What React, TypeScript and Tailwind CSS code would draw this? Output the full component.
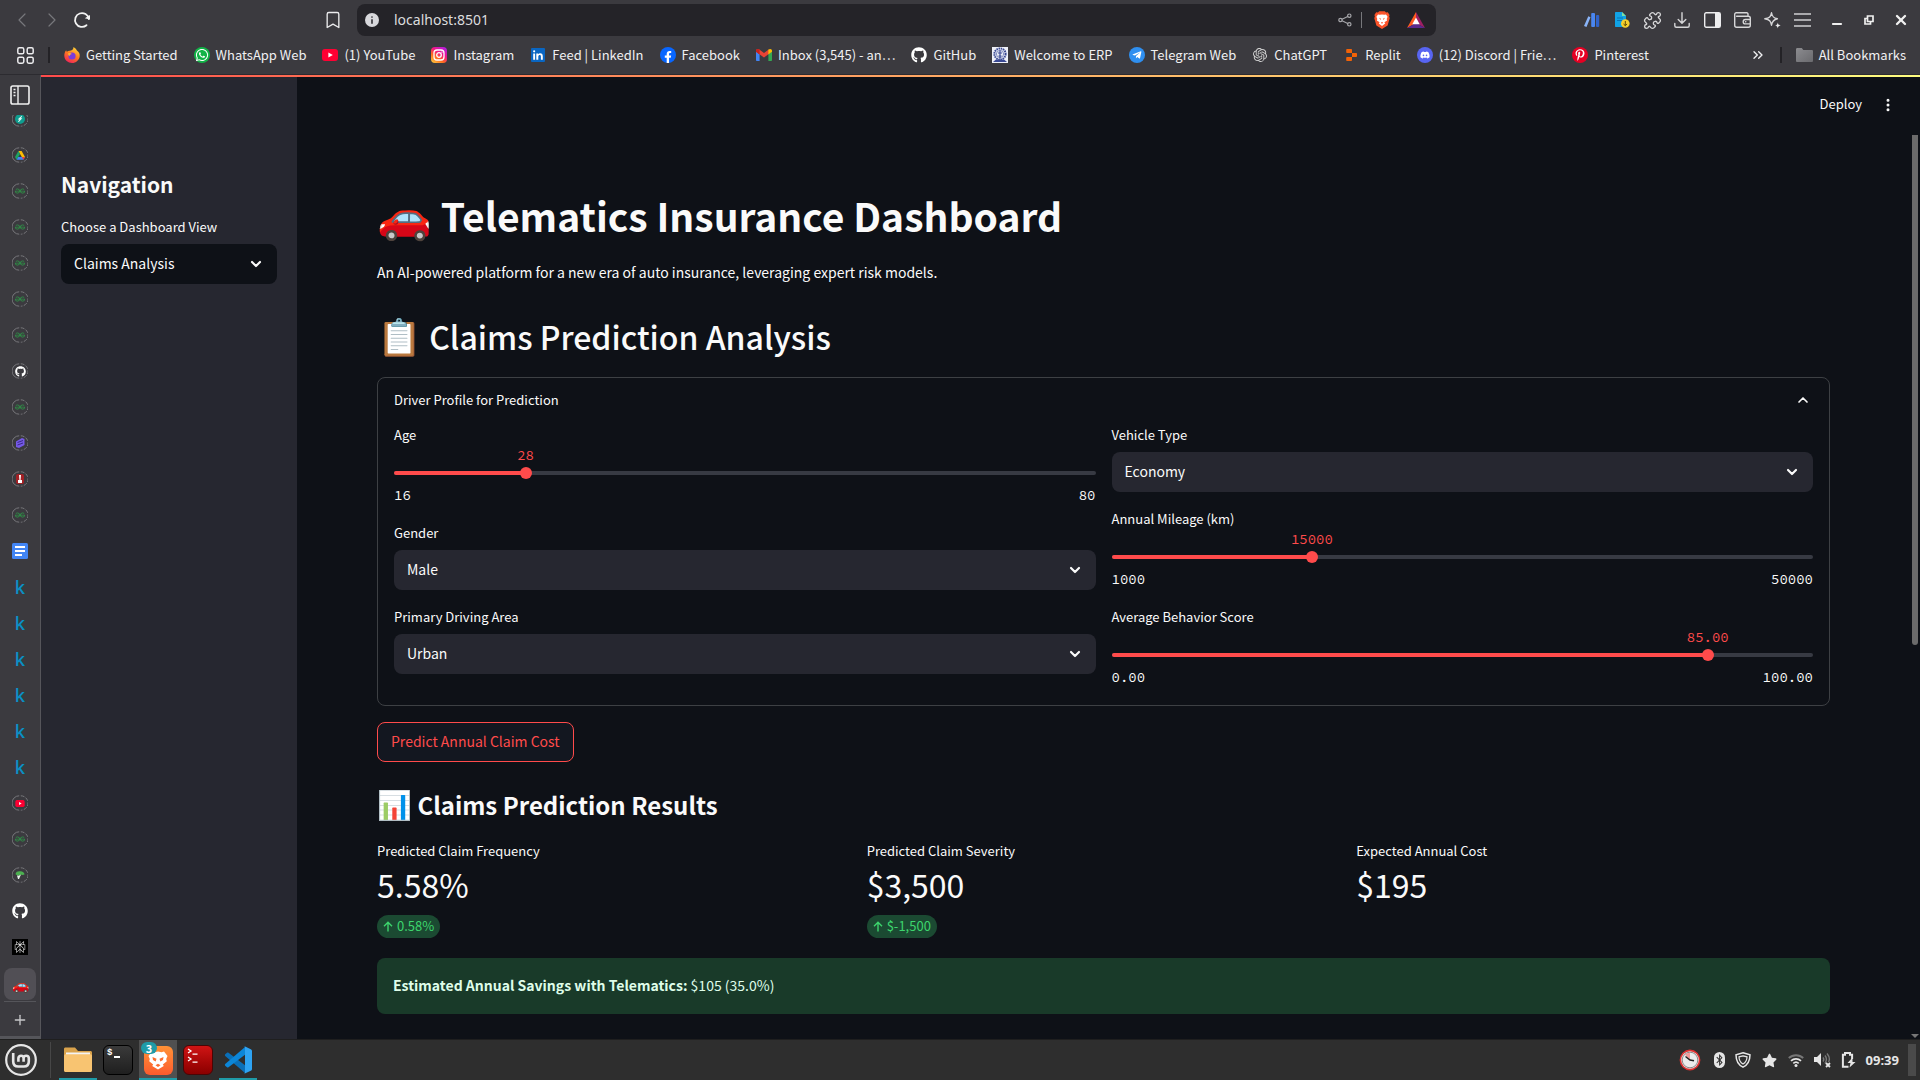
import React, { useId, useState } from "react";
import type { ReactNode } from "react";
import {
  Bookmark,
  ChevronDown,
  ChevronLeft,
  ChevronRight,
  ChevronUp,
  ChevronsRight,
  EllipsisVertical,
  Minus,
  Plus,
  Puzzle,
  X,
} from "lucide-react";
import { FaBluetoothB, FaDiscord, FaFacebookF, FaGithub, FaPinterestP, FaStar, FaTelegramPlane, FaWhatsapp } from "react-icons/fa";
import { SiGeeksforgeeks, SiOpenai, SiPerplexity } from "react-icons/si";

/* ---------- small drawings ---------- */

const Firefox = () => (
  <svg viewBox="0 0 16 16" className="size-4">
    <defs>
      <linearGradient id="ff" x1="0.8" y1="0" x2="0.3" y2="1">
        <stop offset="0" stopColor="#ffde3a" />
        <stop offset="0.5" stopColor="#ff7a1f" />
        <stop offset="1" stopColor="#f0235a" />
      </linearGradient>
    </defs>
    <path d="M9.500 0c2 1.200 3 2.600 3.400 3.600C15 5 16 7 15.700 9.200 15.200 13 12 16 8 16S.4 13 .3 8.800C.2 6.600 1 4.500 2.200 3.200c.1.700.4 1.200.7 1.500C4 3.800 5 3.500 6 3.700 8.500 3.500 9.600 1.800 9.500 0z" fill="url(#ff)" />
    <circle cx="8" cy="9" r="3.600" fill="#7a3bdb" />
    <path d="M4 6.500c1.500-.8 3-.4 3.800.5-.8.300-2 .6-2 1.800C4.800 9 4.200 8 4 6.500z" fill="#ffb02e" />
  </svg>
);

const YouTube = ({ className = "h-3 w-4" }: { className?: string }) => (
  <svg viewBox="0 0 16 12" className={className}>
    <rect width="16" height="12" rx="3" fill="#ff0033" />
    <path d="M6.400 3.400v5.200L10.800 6z" fill="#fff" />
  </svg>
);

const Instagram = () => (
  <svg viewBox="0 0 16 16" className="size-4">
    <defs>
      <linearGradient id="ig" x1="0.1" y1="1" x2="0.8" y2="0">
        <stop offset="0" stopColor="#ffc83d" />
        <stop offset="0.35" stopColor="#ff6a1f" />
        <stop offset="0.65" stopColor="#f0148a" />
        <stop offset="1" stopColor="#b41ee0" />
      </linearGradient>
    </defs>
    <rect width="16" height="16" rx="4" fill="url(#ig)" />
    <rect x="3" y="3" width="10" height="10" rx="3" fill="none" stroke="#fff" strokeWidth="1.300" />
    <circle cx="8" cy="8" r="2.300" fill="none" stroke="#fff" strokeWidth="1.300" />
    <circle cx="10.900" cy="5.100" r="0.700" fill="#fff" />
  </svg>
);

const LinkedIn = () => (
  <svg viewBox="0 0 14 14" className="size-3.5">
    <rect width="14" height="14" rx="1" fill="#0a66c2" />
    <path d="M2.200 5.400h1.900v6.300H2.200zM3.150 2.200a1.100 1.100 0 110 2.200 1.100 1.100 0 010-2.200zM5.300 5.400h1.800v.9c.4-.7 1.100-1.100 2-1.100 1.900 0 2.700 1.100 2.700 3v3.500H9.900V8.600c0-1-.3-1.600-1.100-1.600-.9 0-1.500.6-1.500 1.700v3H5.300z" fill="#fff" />
  </svg>
);

const Gmail = () => (
  <svg viewBox="0 0 16 12" className="h-3 w-4">
    <path d="M0 2.500v8.700c0 .5.400.8.800.8h2.800V5.200z" fill="#4285f4" />
    <path d="M16 2.500v8.700c0 .5-.4.800-.8.800h-2.800V5.200z" fill="#34a853" />
    <path d="M0 1.800C0 .2 1.800-.6 3 .3l5 3.700 5-3.700v4.500L8 8.600 0 2.700z" fill="#ea4335" />
    <path d="M12.400.8C14-.6 16 .2 16 1.800v.9l-3.600 2.700z" fill="#fbbc04" />
    <path d="M3.600 5.400L0 2.700v-.9C0 .2 1.800-.4 3 .3l.6.400z" fill="#c5221f" />
  </svg>
);

const Erp = () => (
  <svg viewBox="0 0 16 16" className="size-4">
    <rect width="16" height="16" fill="#eef0f8" />
    <circle cx="8" cy="7" r="5.600" fill="none" stroke="#3b4a94" strokeWidth="2" strokeDasharray="1.500 0.700" />
    <circle cx="8" cy="7" r="3.600" fill="none" stroke="#6673b0" strokeWidth="0.800" />
    <path d="M8 3.500v8M6 6h4M6.500 9h3" stroke="#3b4a94" strokeWidth="1.200" />
    <path d="M1 15l3-2.500h8l3 2.500z" fill="#3b4a94" />
  </svg>
);

const Replit = () => (
  <svg viewBox="0 0 16 16" className="size-4">
    <path d="M4 2h4.200c.4 0 .8.400.8.800V6H4a.8.800 0 01-.8-.8V2.800c0-.4.400-.8.8-.8zM9 6h4.200c.4 0 .8.400.8.800v2.400c0 .4-.4.800-.8.800H9zM4 10h5v3.200c0 .4-.4.800-.8.800H4a.8.800 0 01-.8-.8v-2.400c0-.4.400-.8.8-.8z" fill="#f26207" />
  </svg>
);

const FolderSmall = () => (
  <svg viewBox="0 0 17 14" className="h-3.5 w-[17px]">
    <defs>
      <linearGradient id="fs" x1="0" y1="0" x2="1" y2="1">
        <stop offset="0" stopColor="#8c8c90" />
        <stop offset="1" stopColor="#6a6a6e" />
      </linearGradient>
    </defs>
    <path d="M0 1.500C0 .6.500 0 1.300 0h4.500l1.500 2h8.400c.8 0 1.300.5 1.300 1.300v9.400c0 .8-.5 1.300-1.300 1.300H1.300C.5 14 0 13.500 0 12.700z" fill="url(#fs)" />
  </svg>
);

const stroke = { fill: "none", stroke: "#d6d6d8", strokeWidth: 1.4, strokeLinecap: "round", strokeLinejoin: "round" } as const;

const Reload = () => (
  <svg viewBox="0 0 18 18" className="size-[18px]">
    <path d="M13.500 14.200A6.900 6.900 0 1115.800 8" {...stroke} stroke="#f2f2f2" strokeWidth="1.800" />
    <path d="M11.800 7.200l5.200 1.400V4z" fill="#f2f2f2" />
  </svg>
);

const Share = () => (
  <svg viewBox="0 0 14 14" className="size-3.5">
    <g {...stroke} strokeWidth="1.200" stroke="#a5a5a9">
      <circle cx="2.500" cy="7" r="1.700" />
      <circle cx="11.300" cy="2.700" r="1.700" />
      <circle cx="11.300" cy="11.300" r="1.700" />
      <path d="M4.100 6.200l5.600-2.700M4.100 7.800l5.600 2.700" />
    </g>
  </svg>
);

const BraveShield = () => (
  <svg viewBox="0 0 16 18" className="h-[18px] w-4">
    <path d="M4 1.500L5.200.2h5.600L12 1.500l1.800-.2L15.600 4l-.5 1.300.6 1.900-2.100 7.300L8 18l-5.600-3.500L.3 7.200l.6-1.900L.4 4l1.800-2.700z" fill="#fb542b" />
    <path d="M8 3.400l2.300.4 1.700-.4 1.600 2.300-.9 2.200.4 1.500-2.700 1.900.8 1.300L8 15l-3.200-2.400.8-1.300-2.700-1.900.4-1.500-.9-2.200L4 3.400l1.700.4z" fill="#fff" />
    <path d="M5 6.800l2 .9-.5 1.200zM11 6.800l-2 .9.500 1.200zM6.800 11.800L8 11l1.200.8L8 12.800z" fill="#fb542b" />
  </svg>
);

const BatTriangle = () => (
  <svg viewBox="0 0 18 16" className="h-4 w-[18px]">
    <path d="M9 0L0 16l9-5z" fill="#ff5a1f" />
    <path d="M9 0l9 16-9-5z" fill="#9e1f63" />
    <path d="M0 16h18l-9-5z" fill="#5b2a8c" />
    <path d="M9 5.500l3.700 6.800H5.300z" fill="#fff" />
  </svg>
);

const BlueBars = () => (
  <svg viewBox="0 0 16 14" className="h-3.5 w-4">
    <path d="M0 13.500L4.500 3l2 .9v9.600z" fill="#8ab4f8" opacity="0" />
    <path d="M0 13L4.300 3.200l2.200 1L2.500 14z" fill="#8ab4f8" />
    <rect x="7.200" width="3.800" height="14" rx="1" fill="#4a86f0" />
    <rect x="12" y="2" width="3.200" height="12" rx="1" fill="#2f62c9" />
  </svg>
);

const DocDownload = () => (
  <svg viewBox="0 0 16 16" className="size-4">
    <path d="M1 1c0-.6.400-1 1-1h6l4 4v11H2c-.6 0-1-.4-1-1z" fill="#11a3e6" />
    <path d="M8 0l4 4H8z" fill="#7ee0a0" />
    <path d="M3 6h6M3 8.500h5" stroke="#0873b5" />
    <circle cx="11.300" cy="11.500" r="4.300" fill="#f7d02c" />
    <path d="M11.300 9v4.500M9.500 12l1.800 1.700L13.100 12" fill="none" stroke="#5a4a00" />
  </svg>
);

const Download = () => (
  <svg viewBox="0 0 16 16" className="size-4">
    <path d="M8 .8v10M4.200 7.400L8 11.200l3.800-3.800M.8 11.500v2.200c0 .8.600 1.500 1.500 1.500h11.400c.9 0 1.500-.7 1.500-1.500v-2.200" {...stroke} />
  </svg>
);

const SidePanel = () => (
  <svg viewBox="0 0 17 16" className="h-4 w-[17px]">
    <rect x="0.700" y="0.700" width="15.600" height="14.600" rx="1.500" {...stroke} stroke="#ececee" />
    <path d="M11 1h5v14h-5z" fill="#ececee" />
  </svg>
);

const Wallet = () => (
  <svg viewBox="0 0 17 16" className="h-4 w-[17px]">
    <path d="M14 4V2c0-.7-.5-1.200-1.200-1.200H2.200C1.400.8.700 1.500.7 2.300v11c0 1 .8 1.900 1.900 1.900h11.800c1 0 1.900-.9 1.900-1.900V6c0-1-.8-1.800-1.900-1.800H2.600M16 7.500h-4.600a2.200 2.200 0 000 4.400H16M11.600 9.700h.2" {...stroke} />
  </svg>
);

const Sparkle = () => (
  <svg viewBox="0 0 17 17" className="size-[17px]">
    <path d="M7.500.8c.7 3.800 1.900 5.200 5.900 6-4 .8-5.200 2.500-5.900 6.400-.7-3.900-1.900-5.600-6.700-6.400 4.800-.8 6-2.200 6.700-6z" {...stroke} />
    <path d="M13.800 10.400c.3 1.900.9 2.600 2.900 3-2 .4-2.600 1.100-2.900 3.100-.3-2-.9-2.700-2.900-3.100 2-.4 2.600-1.100 2.900-3z" fill="#ececee" />
  </svg>
);

const Menu = () => (
  <svg viewBox="0 0 17 14" className="h-3.5 w-[17px]">
    <path d="M0 1h17M0 7h17M0 13h17" stroke="#d0d0d2" strokeWidth="1.600" />
  </svg>
);

const Restore = () => (
  <svg viewBox="0 0 10 10" className="size-2.5">
    <path d="M3.500 1h5.500v5.500H3.500zM3.500 3.500H1V9h5.500V6.500" fill="none" stroke="#f0f0f0" strokeWidth="1.700" />
  </svg>
);

const Apps = () => (
  <svg viewBox="0 0 17 17" className="size-[17px]">
    {[0.8, 10.2].map((x) =>
      [0.8, 10.2].map((y) => (
        <rect key={`${x}-${y}`} x={x} y={y} width="6" height="6" rx="1.600" {...stroke} stroke="#ececee" strokeWidth="1.500" />
      )),
    )}
  </svg>
);

const TabStripToggle = () => (
  <svg viewBox="0 0 20 20" className="size-5">
    <rect x="1" y="1" width="18" height="18" rx="1.800" {...stroke} stroke="#f0f0f0" strokeWidth="1.600" />
    <path d="M8 1v18" stroke="#f0f0f0" strokeWidth="1.400" />
    <path d="M3.500 4.500h2M3.500 7.500h2M3.500 10.500h2" stroke="#f0f0f0" strokeWidth="1.400" />
  </svg>
);

/* ---------- vertical tab icons ---------- */

const Ring = ({ children }: { children?: ReactNode }) => (
  <span className="relative flex size-4 items-center justify-center">
    <svg viewBox="0 0 16 16" className="absolute inset-0 size-4">
      <path d="M7.200.8a7.200 7.200 0 000 14.400" fill="none" stroke="#77777b" />
      <path d="M8.800.8a7.200 7.200 0 010 14.400" fill="none" stroke="#77777b" strokeDasharray="3.800 1.400" />
    </svg>
    {children}
  </span>
);

const Geeks = () => (
  <Ring>
    <SiGeeksforgeeks className="size-[10px] text-[#2f8d46]" />
  </Ring>
);

const Teal = () => (
  <Ring>
    <svg viewBox="0 0 10 10" className="size-2.5">
      <circle cx="5" cy="5" r="5" fill="#0f9d8f" />
      <path d="M6.800 2L3.300 5.200h1.500L3.400 8l3.400-3.600H5.400z" fill="#fff" stroke="#fff" strokeWidth="0.500" />
    </svg>
  </Ring>
);

const Drive = () => (
  <Ring>
    <svg viewBox="0 0 10 9" className="h-[9px] w-2.5">
      <path d="M3.400 0h3.200L10 6H6.800z" fill="#fbbc04" />
      <path d="M3.400 0L0 6l1.600 2.800L5 3z" fill="#1ea362" />
      <path d="M3.200 6H10L8.400 8.800H1.600z" fill="#4285f4" />
      <path d="M6.800 6H10L8.400 8.800z" fill="#ea4335" />
    </svg>
  </Ring>
);

const Purple = () => (
  <Ring>
    <svg viewBox="0 0 10 10" className="size-2.5">
      <path d="M1 3.500L7 0l2.500 1v6L4 10 1 9z" fill="#7559e8" />
      <path d="M2.500 4.500L8 2.500M2.500 7L8 5" stroke="#3a2a86" />
    </svg>
  </Ring>
);

const RedPin = () => (
  <Ring>
    <svg viewBox="0 0 8 10" className="h-2.5 w-2">
      <rect width="8" height="10" rx="2" fill="#a31f24" />
      <path d="M3 1h2l-.4 5H6v3H2V6h1.400z" fill="#fff" />
    </svg>
  </Ring>
);

const Tree = () => (
  <Ring>
    <svg viewBox="0 0 10 10" className="size-2.5">
      <path d="M.5 4C1 1.500 3 1 5 1.200 7.500 1 9.500 2.500 9.500 4.500 8 5.500 6 4.500 5 5 3.500 5.500 1 5.500.5 4z" fill="#4cb050" />
      <path d="M2 5.500c2 .5 3-.5 4-1l-2 4.500H3z" fill="#e8f5e9" />
    </svg>
  </Ring>
);

const Docs = () => (
  <svg viewBox="0 0 16 16" className="size-4">
    <rect width="16" height="16" rx="1.500" fill="#4285f4" />
    <path d="M3 4h10M3 8h10M3 12h7" stroke="#fff" strokeWidth="2" />
  </svg>
);

const Kaggle = () => <span className="font-[Open_Sans,sans-serif] text-lg leading-5 font-semibold text-[#0a8fc4]">k</span>;

const Perplexity = () => (
  <span className="flex size-4 items-center justify-center bg-black">
    <SiPerplexity className="size-3 text-neutral-200" />
  </span>
);

const tabs: { title: string; icon: ReactNode }[] = [
  { title: "Drive", icon: <Drive /> },
  ...[1, 2, 3, 4, 5].map((n) => ({ title: `GeeksforGeeks ${n}`, icon: <Geeks /> })),
  { title: "GitHub", icon: <Ring><FaGithub className="size-[11px] text-white" /></Ring> },
  { title: "GeeksforGeeks 6", icon: <Geeks /> },
  { title: "Notes", icon: <Purple /> },
  { title: "Pinned", icon: <RedPin /> },
  { title: "GeeksforGeeks 7", icon: <Geeks /> },
  { title: "Docs", icon: <Docs /> },
  ...[1, 2, 3, 4, 5, 6].map((n) => ({ title: `Kaggle ${n}`, icon: <Kaggle /> })),
  { title: "YouTube", icon: <Ring><YouTube className="h-[7px] w-[10px]" /></Ring> },
  { title: "GeeksforGeeks 8", icon: <Geeks /> },
  { title: "Garden", icon: <Tree /> },
  { title: "GitHub repository", icon: <FaGithub className="size-4 text-white" /> },
  { title: "Perplexity", icon: <Perplexity /> },
];

const Round = ({ className, children }: { className: string; children: ReactNode }) => (
  <span className={`flex size-4 justify-center rounded-full text-white ${className}`}>{children}</span>
);

const bookmarks: { label: string; icon: ReactNode }[] = [
  { label: "Getting Started", icon: <Firefox /> },
  {
    label: "WhatsApp Web",
    icon: <Round className="items-center bg-[#12b347]"><FaWhatsapp className="size-3.5" /></Round>,
  },
  { label: "(1) YouTube", icon: <YouTube /> },
  { label: "Instagram", icon: <Instagram /> },
  { label: "Feed | LinkedIn", icon: <LinkedIn /> },
  {
    label: "Facebook",
    icon: <Round className="items-end bg-[#0866ff]"><FaFacebookF className="size-3" /></Round>,
  },
  { label: "Inbox (3,545) - an…", icon: <Gmail /> },
  { label: "GitHub", icon: <FaGithub className="size-4 text-white" /> },
  { label: "Welcome to ERP", icon: <Erp /> },
  { label: "Telegram Web", icon: <Round className="items-center bg-[#2f8ff0]"><FaTelegramPlane className="size-2.5" /></Round> },
  { label: "ChatGPT", icon: <SiOpenai className="size-3.5 text-neutral-300" /> },
  { label: "Replit", icon: <Replit /> },
  { label: "(12) Discord | Frie…", icon: <Round className="items-center bg-[#5865f2]"><FaDiscord className="size-2.5" /></Round> },
  { label: "Pinterest", icon: <Round className="items-center bg-[#e60023]"><FaPinterestP className="size-3" /></Round> },
];

/* ---------- browser window ---------- */

const IconButton = ({ label, className = "", children }: { label: string; className?: string; children: ReactNode }) => (
  <button type="button" aria-label={label} className={`flex shrink-0 items-center justify-center ${className}`}>
    {children}
  </button>
);

function Toolbar() {
  return (
    <div className="flex h-10 items-center pr-[3px]">
      <IconButton label="Back" className="ml-2 w-7 text-[#77777b]"><ChevronLeft className="size-6" strokeWidth={1.2} /></IconButton>
      <IconButton label="Forward" className="ml-0.5 w-7 text-[#77777b]"><ChevronRight className="size-6" strokeWidth={1.2} /></IconButton>
      <IconButton label="Reload" className="ml-0.5 w-7"><Reload /></IconButton>
      <IconButton label="Bookmark this page" className="ml-[223px] w-7 text-[#ececee]"><Bookmark className="size-5" strokeWidth={1.6} /></IconButton>
      <div className="mr-[141px] ml-2.5 flex h-8 min-w-0 flex-1 items-center rounded-lg bg-[#242328] pr-2.5 pl-2">
        <span className="flex size-3.5 items-center justify-center rounded-full bg-[#d8d8dc]">
          <svg viewBox="0 0 8 10" className="h-2 w-1.5"><path d="M4 0a1 1 0 010 2.200A1 1 0 014 0zM3 4h2v6H3z" fill="#242328" /></svg>
        </span>
        <input
          aria-label="Address"
          defaultValue="localhost:8501"
          className="ml-[15px] min-w-0 flex-1 bg-transparent text-sm text-[#dcdcde] outline-none"
        />
        <IconButton label="Share" className="w-5"><Share /></IconButton>
        <span className="mx-1.5 h-4 w-px bg-[#77777b]" />
        <IconButton label="Brave Shields" className="ml-1 w-5"><BraveShield /></IconButton>
        <IconButton label="Rewards" className="ml-3.5 w-5"><BatTriangle /></IconButton>
      </div>
      <IconButton label="Analytics extension" className="w-[30px]"><BlueBars /></IconButton>
      <IconButton label="Download extension" className="w-[30px]"><DocDownload /></IconButton>
      <IconButton label="Extensions" className="w-[30px] text-[#d6d6d8]"><Puzzle className="size-[19px]" strokeWidth={1.7} /></IconButton>
      <IconButton label="Downloads" className="w-[30px]"><Download /></IconButton>
      <IconButton label="Side panel" className="w-[30px]"><SidePanel /></IconButton>
      <IconButton label="Wallet" className="w-[30px]"><Wallet /></IconButton>
      <IconButton label="Leo" className="w-[30px]"><Sparkle /></IconButton>
      <IconButton label="Menu" className="w-[30px]"><Menu /></IconButton>
      <IconButton label="Minimize" className="ml-1 w-8 pt-2 text-[#f0f0f0]"><Minus className="size-3.5" strokeWidth={3.5} /></IconButton>
      <IconButton label="Restore" className="w-8"><Restore /></IconButton>
      <IconButton label="Close" className="w-8 text-[#f0f0f0]"><X className="size-4" strokeWidth={3.5} /></IconButton>
    </div>
  );
}

function BookmarksBar() {
  return (
    <nav aria-label="Bookmarks" className="flex h-[30px] items-center pr-3.5 pl-[17px] font-[Noto_Sans_CJK_SC,sans-serif] text-[13px] leading-5 whitespace-nowrap text-[#f0f0f2]">
      <IconButton label="Apps" className="w-[17px]"><Apps /></IconButton>
      <span className="ml-3.5 h-4 w-0.5 bg-[#232226]" />
      <ul className="ml-3.5 flex items-center gap-4">
        {bookmarks.map((b) => (
          <li key={b.label}>
            <a href="#" className="flex items-center gap-1.5">
              <span className="flex size-4 items-center justify-center">{b.icon}</span>
              {b.label}
            </a>
          </li>
        ))}
      </ul>
      <div className="flex-1" />
      <IconButton label="More bookmarks"><ChevronsRight className="size-4" strokeWidth={2} /></IconButton>
      <span className="mx-3.5 h-4 w-0.5 bg-[#232226]" />
      <a href="#" className="flex items-center gap-1.5"><FolderSmall />All Bookmarks</a>
    </nav>
  );
}

function TabStrip() {
  return (
    <nav aria-label="Tabs" className="flex w-[41px] shrink-0 flex-col items-center border-r border-b-[3px] border-[#55555a] bg-[#3b3a3f] pt-2.5">
      <IconButton label="Toggle tab strip" className="h-5"><TabStripToggle /></IconButton>
      <div className="mt-2.5 h-3 overflow-hidden"><div className="-mt-1"><Teal /></div></div>
      <ul className="mt-2.5 flex flex-col">
        {tabs.map((t) => (
          <li key={t.title}>
            <button type="button" aria-label={t.title} className="flex h-9 w-8 items-center justify-center">{t.icon}</button>
          </li>
        ))}
      </ul>
      <div className="mt-[3px] border-b border-[#55555a] pb-px">
        <button type="button" aria-label="Telematics Insurance Dashboard" className="flex size-8 items-center justify-center rounded-lg bg-[#514f55] text-sm leading-4">🚗</button>
      </div>
      <IconButton label="New tab" className="mt-2.5 h-4 text-[#c8c8ca]"><Plus className="size-4" strokeWidth={2} /></IconButton>
    </nav>
  );
}

/* ---------- dashboard ---------- */

const Label = ({ htmlFor, children }: { htmlFor: string; children: ReactNode }) => (
  <label htmlFor={htmlFor} className="block h-6 text-[13px] leading-[22px]">{children}</label>
);

function SelectField({ label, options, dark = false }: { label: string; options: string[]; dark?: boolean }) {
  const id = useId();
  return (
    <div>
      <Label htmlFor={id}>{label}</Label>
      <div className="relative mt-1">
        <select
          id={id}
          className={`h-10 w-full appearance-none rounded-lg pr-10 pb-0.5 pl-[13px] text-sm outline-none ${dark ? "bg-[#0e1117]" : "bg-[#262730]"}`}
        >
          {options.map((o) => (
            <option key={o}>{o}</option>
          ))}
        </select>
        <ChevronDown className="pointer-events-none absolute top-3 right-[13px] size-4" strokeWidth={3.2} />
      </div>
    </div>
  );
}

const mono = "font-[Source_Code_Pro,Liberation_Mono,monospace] text-sm leading-5";

function SliderField({ label, min, max, initial, digits = 0 }: { label: string; min: number; max: number; initial: number; digits?: number }) {
  const id = useId();
  const [value, setValue] = useState(initial);
  const percent = `${((value - min) / (max - min)) * 100}%`;
  return (
    <div>
      <Label htmlFor={id}>{label}</Label>
      <div className="relative mt-[23px] h-1 rounded-full bg-[#373a43]">
        <div className="h-1 rounded-full bg-[#ff4b4b]" style={{ width: percent }} />
        <output
          htmlFor={id}
          className={`absolute bottom-full mb-1.5 -translate-x-1/2 text-[#ff4b4b] ${mono}`}
          style={{ left: percent }}
        >
          {value.toFixed(digits)}
        </output>
        <input
          id={id}
          type="range"
          min={min}
          max={max}
          value={value}
          onChange={(e) => setValue(Number(e.target.value))}
          className="absolute -inset-x-1.5 -top-1 h-3 w-[calc(100%+12px)] cursor-pointer appearance-none bg-transparent outline-none [&::-webkit-slider-thumb]:size-3 [&::-webkit-slider-thumb]:appearance-none [&::-webkit-slider-thumb]:rounded-full [&::-webkit-slider-thumb]:bg-[#ff4b4b]"
        />
      </div>
      <div className={`mt-2.5 flex h-[21px] justify-between ${mono}`}>
        <span>{min.toFixed(digits)}</span>
        <span>{max.toFixed(digits)}</span>
      </div>
    </div>
  );
}

function Metric({ label, value, delta }: { label: string; value: string; delta?: string }) {
  return (
    <div>
      <div className="text-[13px] leading-5">{label}</div>
      <div className="mt-px text-[32px] leading-11">{value}</div>
      {delta && (
        <div className="mt-[9px] flex h-[23px] w-fit items-center gap-1 rounded-full bg-[#1b4a32] px-1.5 pb-px text-[13px] leading-5 text-[#3dd56d]">
          <svg viewBox="0 0 10 11" className="h-[11px] w-2.5">
            <path d="M5 10.500V1.200M1 5.200l4-4 4 4" fill="none" stroke="currentColor" strokeWidth="1.400" />
          </svg>
          {delta}
        </div>
      )}
    </div>
  );
}

function Dashboard() {
  const [open, setOpen] = useState(true);
  return (
    <main className="relative flex min-w-0 flex-1 flex-col bg-[#0e1117] pr-[90px] pb-6 pl-20">
      <div className="absolute top-4 right-6 flex items-center gap-[18px]">
        <button type="button" className="pb-0.5 text-[13px] leading-[22px]">Deploy</button>
        <IconButton label="More options"><EllipsisVertical className="size-4" strokeWidth={2.5} /></IconButton>
      </div>
      <div aria-hidden="true" className="absolute inset-y-0 right-0 flex w-2.5 flex-col items-center pt-[58px] pb-px">
        <span className="h-[510px] w-1.5 rounded-b-sm bg-[#6b6b6b]" />
        <svg viewBox="0 0 8 4" className="mt-auto h-1 w-2"><path d="M0 0h8L4 4z" fill="#777" /></svg>
      </div>

      <h1 className="mt-28 text-[39px] leading-[53px] font-bold"><span className="text-[44px] leading-0">🚗</span> Telematics Insurance Dashboard</h1>
      <p className="mt-[18px] text-sm leading-6">An AI-powered platform for a new era of auto insurance, leveraging expert risk models.</p>
      <h2 className="mt-[31px] text-[32px] leading-[43px] font-medium"><span className="text-4xl leading-0">📋</span> Claims Prediction Analysis</h2>

      <section className="mt-[19px] rounded-lg border border-[#3d4044] px-4 pb-[17px]">
        <button type="button" aria-expanded={open} onClick={() => setOpen(!open)} className="flex h-[46px] w-full items-center justify-between pr-0.5 pb-0.5 text-[13px]">
          Driver Profile for Prediction
          {open ? <ChevronUp className="size-4" strokeWidth={2.5} /> : <ChevronDown className="size-4" strokeWidth={2.5} />}
        </button>
        {open && (
          <div className="grid grid-cols-2 gap-4">
            <div className="flex flex-col gap-4">
              <SliderField label="Age" min={16} max={80} initial={28} />
              <SelectField label="Gender" options={["Male", "Female"]} />
              <SelectField label="Primary Driving Area" options={["Urban", "Suburban", "Rural"]} />
            </div>
            <div className="flex flex-col gap-4">
              <SelectField label="Vehicle Type" options={["Economy", "Sedan", "SUV", "Luxury"]} />
              <SliderField label="Annual Mileage (km)" min={1000} max={50000} initial={15000} />
              <SliderField label="Average Behavior Score" min={0} max={100} initial={85} digits={2} />
            </div>
          </div>
        )}
      </section>

      <button type="button" className="mt-4 h-10 self-start rounded-lg border border-[#ff4b4b] bg-[#131720] px-[13px] pb-0.5 text-sm text-[#ff4b4b]">
        Predict Annual Claim Cost
      </button>

      <h3 className="mt-[26px] text-2xl leading-[34px] font-bold"><span className="text-[28px] leading-0">📊</span> Claims Prediction Results</h3>
      <div className="mt-[19px] grid grid-cols-3 gap-4">
        <Metric label="Predicted Claim Frequency" value="5.58%" delta="0.58%" />
        <Metric label="Predicted Claim Severity" value="$3,500" delta="$-1,500" />
        <Metric label="Expected Annual Cost" value="$195" />
      </div>
      <div role="alert" className="mt-5 rounded-lg bg-[#193a29] px-4 pt-[15px] pb-[17px] text-sm leading-6 text-[#dffde9]">
        <strong className="font-bold">Estimated Annual Savings with Telematics:</strong> $105 (35.0%)
      </div>
    </main>
  );
}

/* ---------- desktop panel ---------- */

const MintLogo = () => (
  <svg viewBox="0 0 32 32" className="size-8">
    <circle cx="16" cy="16" r="14.800" fill="#3a3a3a" stroke="#e6e6e6" strokeWidth="2.200" />
    <path d="M8.200 9v8.500c0 3.200 1.800 5 5 5h5.600c3.200 0 5-1.800 5-5v-3.200a2.600 2.600 0 00-5.200 0v3.500M18.600 17.800v-3.500a2.600 2.600 0 00-5.200 0v3.500" fill="none" stroke="#e6e6e6" strokeWidth="2.600" />
  </svg>
);

const Files = () => (
  <svg viewBox="0 0 28 26" className="h-[26px] w-7">
    <path d="M0 2c0-1 .6-1.500 1.500-1.500H11L14 4h12.500c.9 0 1.500.6 1.500 1.500V12H0z" fill="#d9a34c" />
    <path d="M2 5.500h24V9H2z" fill="#f4f4f4" />
    <path d="M0 9c0-1 .6-1.800 1.500-1.800h25c.9 0 1.500.8 1.500 1.800v14.500c0 .9-.6 1.500-1.500 1.500h-25C.6 25 0 24.400 0 23.500z" fill="#f8c471" />
  </svg>
);

const Terminal = () => (
  <span className="flex size-[30px] gap-0.5 rounded-md border border-black bg-linear-to-b from-[#3a3a3a] to-[#1f1f1f] pl-[3px] font-[Liberation_Mono,monospace] text-[9px] leading-3 font-bold text-white">
    <span className="pt-px">$</span><span className="mt-2.5 h-0.5 w-1.5 bg-white" />
  </span>
);

const RedTerminal = () => (
  <span className="flex size-[30px] flex-col rounded-md border border-[#4a0505] bg-linear-to-b from-[#d01414] to-[#8a0000] pt-0.5 pl-[3px]">
    {[1, 2].map((n) => (
      <svg key={n} viewBox="0 0 11 8" className="h-2 w-[11px]">
        <path d="M1 1l3 2-3 2M5.500 6.200h5" fill="none" stroke="#fff" strokeWidth="1.300" />
      </svg>
    ))}
  </span>
);

const BraveApp = () => (
  <span className="flex size-[29px] items-center justify-center rounded-md bg-linear-to-b from-[#ff9136] to-[#fb5a2e]">
    <svg viewBox="0 0 20 20" className="size-5">
      <path d="M4 1.500l2.500.8L10 1.500l3.500.8 2.500-.8L19.500 6l-1.300 3 .6 2.200-4 3.300 1 1.500L10 19.500 4.200 16l1-1.500-4-3.300.6-2.200L.5 6z" fill="#fff" />
      <path d="M4.500 7l4 1.700-.8 2.700L5 10zM15.500 7l-4 1.700.8 2.700L15 10zM7.500 15.200l2.500-1.500 2.500 1.500L10 17z" fill="#fc6e30" />
    </svg>
  </span>
);

const VsCode = () => (
  <svg viewBox="0 0 28 28" className="size-7">
    <path d="M1.200 8.300L3 6.800c.5-.4 1-.3 1.500 0L21 19.200V27L1.200 9.900c-.5-.5-.5-1.100 0-1.600z" fill="#0a6fb8" />
    <path d="M1.200 19.700L3 21.200c.5.400 1 .3 1.500 0L21 8.800V1L1.200 18.100c-.5.500-.5 1.100 0 1.600z" fill="#0c86d8" />
    <path d="M20.800 27.500c-.5 0-.9-.3-1.200-.5.900.7 1.400.2 1.400-1V2c0-1.200-.6-1.700-1.400-1 .3-.3.900-.7 1.500-.4l5.700 2.700c.8.400 1.200 1 1.200 1.800v17.800c0 .8-.4 1.500-1.200 1.800z" fill="#2ea3f2" />
  </svg>
);

const taskIcon = "relative flex h-full w-[38px] items-center justify-center";
const running = "absolute inset-x-0 bottom-0 h-0.5 bg-[#1f9ba8]";

function Panel() {
  return (
    <footer className="flex h-[41px] items-center border-t border-[#1f1f1f] bg-[#2e2e2e] pr-1 pl-[5px]">
      <IconButton label="Start menu"><MintLogo /></IconButton>
      <span className="mr-2 ml-[13px] h-9 w-px bg-[#474747]" />
      <div className="flex h-full gap-0.5">
        <button type="button" aria-label="Files" className={taskIcon}><Files /><span className={running} /></button>
        <button type="button" aria-label="Terminal" className={taskIcon}><Terminal /></button>
        <button type="button" aria-label="Brave" className={`${taskIcon} bg-[#505050]`}>
          <BraveApp />
          <span className="absolute top-0.5 left-0.5 flex h-3 w-4 items-center justify-center rounded-full bg-[#1f9ba8] text-[11px] leading-3 font-bold text-white">3</span>
          <span className={running} />
        </button>
        <button type="button" aria-label="Root terminal" className={taskIcon}><RedTerminal /></button>
        <button type="button" aria-label="Visual Studio Code" className={taskIcon}><VsCode /><span className={running} /></button>
      </div>
      <div className="ml-auto flex items-center text-[#e6e6e6]">
        <svg viewBox="0 0 22 22" className="mr-[13px] size-[22px]">
          <circle cx="11" cy="11" r="9.600" fill="#ececec" stroke="#e03131" strokeWidth="1.600" />
          <circle cx="11" cy="11" r="7.800" fill="none" stroke="#8a8a8a" />
          <path d="M11 11L6 5.500a7 7 0 015-1.800z" fill="#f29b9b" />
          <path d="M6.500 7.500L11 11l4 .8" fill="none" stroke="#222" strokeWidth="1.500" />
        </svg>
        <span className="mr-2.5 flex h-4 w-[11px] items-center justify-center rounded-full bg-[#e6e6e6] text-[#2e2e2e]"><FaBluetoothB className="size-3" /></span>
        <svg viewBox="0 0 16 16" className="mr-[11px] size-4">
          <path d="M8 .8l7 1.900c0 6-2 10-7 12.500C3 12.700 1 8.700 1 2.700z" fill="none" stroke="currentColor" strokeWidth="1.500" />
          <path d="M8 3.800l4 1c0 3.500-1.200 5.700-4 7.300-2.800-1.600-4-3.800-4-7.300z" fill="none" stroke="currentColor" strokeWidth="1.200" />
        </svg>
        <FaStar className="mr-[11px] size-[15px]" />
        <svg viewBox="0 0 16 13" className="mr-2.5 h-[13px] w-4">
          <path d="M.8 4a10.500 10.500 0 0114.400 0" fill="none" stroke="#777" strokeWidth="2" />
          <path d="M3 6.800a7.300 7.300 0 0110 0M5.300 9.300a4 4 0 015.400 0" fill="none" stroke="currentColor" strokeWidth="1.700" />
          <circle cx="8" cy="11.500" r="1.500" fill="currentColor" />
        </svg>
        <svg viewBox="0 0 17 16" className="mr-2.5 h-4 w-[17px]">
          <path d="M0 5h3l4-4v13l-4-4H0z" fill="currentColor" />
          <path d="M9 5.500c1 1.300 1 2.700 0 4M11 3.500c2 2.500 2 5 0 8M13 1.500c2.500 3 3 6 1.500 8.500" fill="none" stroke="#777" strokeWidth="1.400" />
          <path d="M12 11l4 4M16 11l-4 4" stroke="currentColor" strokeWidth="1.800" />
        </svg>
        <svg viewBox="0 0 15 16" className="mr-2.5 h-4 w-[15px]">
          <path d="M7.500 14.800H1.900V2.800H4V1h5v1.800h2.100V7" fill="none" stroke="currentColor" strokeWidth="2" />
          <path d="M11.500 5.500L6.500 11h3l-1 4.500L14.500 10h-3z" fill="currentColor" />
        </svg>
        <time className="mr-[9px] font-[Noto_Sans,sans-serif] text-[13px] leading-5 font-bold">09:39</time>
        <span className="h-8 w-2 bg-[#4a4a4a]" />
      </div>
    </footer>
  );
}

export default function App() {
  return (
    <div className="flex min-h-screen flex-col bg-[#3b3a3f] font-[Noto_Sans_CJK_SC,sans-serif] text-[#fafafa]">
      <header className="border-b border-[#2c2b30] pb-1 font-[Noto_Sans,sans-serif]">
        <Toolbar />
        <BookmarksBar />
      </header>
      <div className="flex flex-1">
        <TabStrip />
        <div className="flex min-w-0 flex-1 flex-col">
          <div className="h-0.5 bg-linear-to-r from-[#ff4b4b] to-[#fffd80]" />
          <div className="flex flex-1">
            <aside className="w-64 shrink-0 bg-[#262730] px-5 pt-[92px]">
              <h2 className="text-[21px] leading-[30px] font-bold">Navigation</h2>
              <div className="mt-[17px]">
                <SelectField dark label="Choose a Dashboard View" options={["Claims Analysis", "Overview", "Risk Scoring"]} />
              </div>
            </aside>
            <Dashboard />
          </div>
        </div>
      </div>
      <Panel />
    </div>
  );
}
